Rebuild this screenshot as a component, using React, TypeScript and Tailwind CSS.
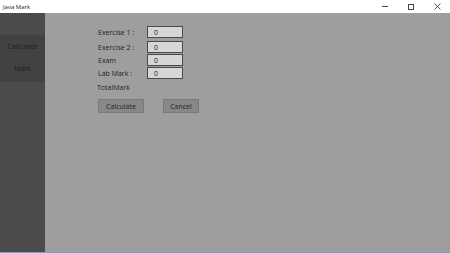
import React from "react";

const fields = [
  { label: "Exercise 1 :", mt: "mt-[13px]" },
  { label: "Exercise 2 :", mt: "mt-[3px]" },
  { label: "Exam", mt: "mt-[1px]" },
  { label: "Lab Mark :", mt: "mt-[1px]" },
];

const App: React.FC = () => {
  return (
    <div
      className="w-[450px] h-[253px] flex flex-col bg-white border-b border-[#6fa3d6] overflow-hidden"
      style={{ fontFamily: '"Open Sans", "Noto Sans", sans-serif' }}
    >
      {/* Title bar */}
      <div className="h-[13px] flex items-center bg-white text-[6px] text-[#222]">
        <span className="pl-[3px] leading-none">Java Mark</span>
        <div className="ml-auto flex items-center h-full">
          <span className="w-[26px] flex justify-center">
            <span className="w-[6px] h-px bg-[#444]" />
          </span>
          <span className="w-[26px] flex justify-center">
            <span className="w-[6px] h-[6px] border border-[#444]" />
          </span>
          <span className="w-[26px] flex justify-center">
            <svg width="7" height="7" viewBox="0 0 7 7">
              <path d="M0.5 0.5 L6.5 6.5 M6.5 0.5 L0.5 6.5" stroke="#444" strokeWidth="0.9" />
            </svg>
          </span>
        </div>
      </div>

      <div className="flex flex-1">
        {/* Sidebar */}
        <div className="w-[45px] bg-[#4b4b4b] flex flex-col pt-[22px]">
          <div className="h-[47px] bg-[#424242] flex flex-col items-center text-[7px] text-[#1e1e1e] leading-none">
            <span className="mt-[8px]">Calculate</span>
            <span className="mt-[15px]">Mark</span>
          </div>
        </div>

        {/* Main */}
        <div className="flex-1 bg-[#9e9e9e] pl-[53px] text-[7px] text-[#222] leading-none">
          {fields.map((f) => (
            <div key={f.label} className={`flex items-center ${f.mt}`}>
              <span className="w-[49px]">{f.label}</span>
              <div className="w-[36px] h-[12px] bg-[#d6d6d6] border border-[#4a4a4a] flex items-center pl-[6px]">
                0
              </div>
            </div>
          ))}
          <div className="mt-[3px] h-[10px] flex items-center -ml-px">TotalMark</div>
          <div className="mt-[7px] flex gap-[19px]">
            <div className="w-[46px] h-[14px] bg-[#888888] border border-[#7a7a7a] flex items-center justify-center">
              Calculate
            </div>
            <div className="w-[36px] h-[14px] bg-[#888888] border border-[#7a7a7a] flex items-center justify-center">
              Cancel
            </div>
          </div>
        </div>
      </div>
    </div>
  );
};

export default App;
